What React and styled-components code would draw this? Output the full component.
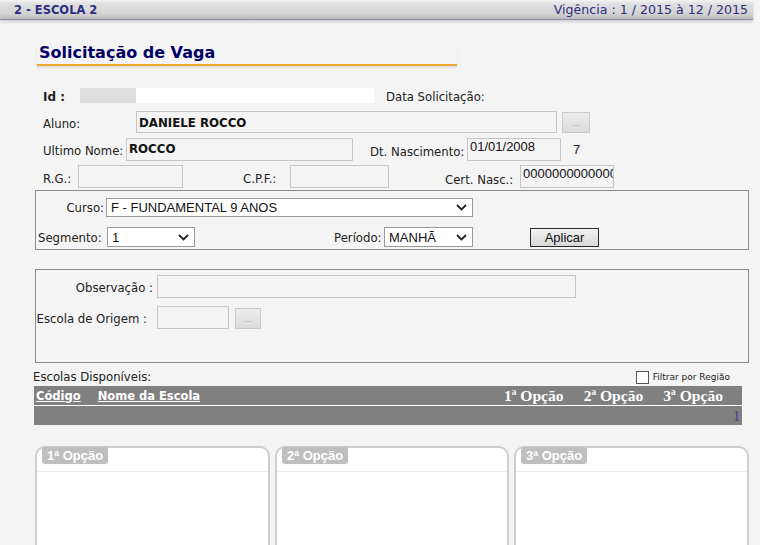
import React from 'react';
import styled, { createGlobalStyle } from 'styled-components';

const GlobalStyle = createGlobalStyle`
  body {
    margin: 0;
    background: #f4f4f4;
    font-family: "DejaVu Sans", Verdana, sans-serif;
    font-size: 11.7px;
    color: #222;
  }
`;

const Page = styled.div`
  width: 760px;
  height: 545px;
  overflow: hidden;
  background: #f4f4f4;
`;

const TopBar = styled.div`
  width: 753px;
  height: 20px;
  box-sizing: border-box;
  display: flex;
  justify-content: space-between;
  align-items: center;
  padding: 0 5px 0 14px;
  background: linear-gradient(#f4f4f4 0%, #e0e0e0 20%, #d4d4d4 70%, #bdbdbd 100%);
  border-bottom: 1px solid #8a8aa4;
  box-shadow: 0 2px 3px rgba(0, 0, 0, 0.15);
`;

const School = styled.span`
  font-weight: bold;
  font-size: 11.5px;
  color: #2e2e80;
`;

const Validity = styled.span`
  font-size: 12.6px;
  color: #2e2e80;
`;

const Main = styled.div`
  padding-left: 33px;
`;

const TitleWrap = styled.div`
  margin: 23px 0 0 4px;
  width: 420px;
  padding-bottom: 1px;
  border-bottom: 2px solid #f0a830;
  box-shadow: 0 2px 2px rgba(0, 0, 0, 0.1);
`;

const Title = styled.h1`
  margin: 0 0 0 2px;
  font-family: "DejaVu Sans", Verdana, sans-serif;
  font-size: 16px;
  line-height: 20px;
  font-weight: bold;
  color: #000066;
`;

const Row = styled.div`
  display: flex;
  align-items: center;
  height: ${p => p.$h}px;
  margin-top: ${p => p.$mt || 0}px;
  padding-left: ${p => (p.$pl === undefined ? 10 : p.$pl)}px;
`;

const Label = styled.span`
  flex: none;
  width: ${p => (p.$w ? `${p.$w}px` : 'auto')};
  margin-left: ${p => p.$ml || 0}px;
  padding-right: ${p => p.$pr || 0}px;
  padding-top: ${p => p.$dy || 0}px;
  box-sizing: border-box;
  text-align: ${p => (p.$right ? 'right' : 'left')};
  font-weight: ${p => (p.$bold ? 'bold' : 'normal')};
  font-size: ${p => p.$size || 11.7}px;
  white-space: nowrap;
  color: #222;
`;

const Cell = styled.div`
  flex: none;
  width: ${p => p.$w}px;
  height: 100%;
  background: ${p => p.$bg};
`;

const TextBox = styled.div`
  flex: none;
  width: ${p => p.$w}px;
  height: 100%;
  margin-left: ${p => p.$ml || 0}px;
  box-sizing: border-box;
  border: 1px solid #c6c6c6;
  background: #f4f4f4;
  padding: ${p => p.$pt || 3}px 2px 0;
  overflow: hidden;
  white-space: nowrap;
  font-family: ${p => (p.$plain ? '"Liberation Sans", Arial, sans-serif' : '"DejaVu Sans", Verdana, sans-serif')};
  font-size: ${p => (p.$plain ? 13 : 11.8)}px;
  font-weight: ${p => (p.$plain ? 'normal' : 'bold')};
  line-height: 14px;
  color: #111;
`;

const MiniButton = styled.div`
  flex: none;
  width: ${p => p.$w}px;
  height: 21px;
  margin-left: ${p => p.$ml}px;
  align-self: ${p => (p.$low ? 'flex-end' : 'center')};
  box-sizing: border-box;
  border: 1px solid #c8c8c8;
  background: linear-gradient(#ececec, #dcdcdc);
  display: flex;
  align-items: flex-end;
  justify-content: center;
  padding-bottom: 4px;
  font-size: 8px;
  color: #999;
`;

const Plain = styled.span`
  margin-left: ${p => p.$ml}px;
  font-family: "Liberation Sans", Arial, sans-serif;
  font-size: 13px;
  color: #222;
`;

const Panel = styled.div`
  width: 714px;
  height: ${p => p.$h}px;
  margin: ${p => p.$mt}px 0 0 2px;
  box-sizing: border-box;
  border: 1px solid #8c8c8c;
  padding-top: ${p => p.$pt}px;
`;

const Select = styled.div`
  flex: none;
  width: ${p => p.$w}px;
  height: 100%;
  box-sizing: border-box;
  border: 1px solid #9a9a9a;
  background: #fff;
  display: flex;
  align-items: center;
  justify-content: space-between;
  padding: 0 5px 0 4px;
  font-family: "Liberation Sans", Arial, sans-serif;
  font-size: 13px;
  color: #111;
`;

const ApplyButton = styled.button`
  flex: none;
  width: 69px;
  height: 19px;
  margin-left: ${p => p.$ml}px;
  padding: 0;
  border: 1px solid #2a2a2a;
  background: linear-gradient(#f2f2f2, #d8d8d8);
  font-family: "Liberation Sans", Arial, sans-serif;
  font-size: 13px;
  color: #111;
`;

const ListHead = styled.div`
  display: flex;
  align-items: center;
  justify-content: space-between;
  width: 697px;
  margin-top: 7px;
`;

const Filter = styled.label`
  display: flex;
  align-items: center;
  gap: 4px;
  font-size: 9px;
  color: #222;
`;

const Check = styled.span`
  width: 11px;
  height: 11px;
  border: 1px solid #555;
  background: #fff;
`;

const Grid = styled.div`
  width: 708px;
  margin: 2px 0 0 1px;
  background: #808080;
`;

const GridHead = styled.div`
  display: flex;
  align-items: center;
  height: 19px;
  padding: 0 19px 0 2px;
  border-bottom: 1px solid #fff;
`;

const HeadLink = styled.a`
  margin-right: ${p => p.$mr || 0}px;
  color: #fff;
  font-weight: bold;
  font-size: 11.5px;
  text-decoration: underline;
`;

const OptionHeads = styled.div`
  display: flex;
  gap: 20px;
  margin-left: auto;
`;

const OptionHead = styled.span`
  font-family: "Liberation Serif", "Times New Roman", serif;
  font-weight: bold;
  font-size: 15.6px;
  color: #fff;
`;

const GridRow = styled.div`
  height: 19px;
  line-height: 21px;
  text-align: right;
  padding-right: 2px;
  font-family: "Liberation Serif", "Times New Roman", serif;
  font-size: 14px;
  color: #3c3c90;
`;

const Choices = styled.div`
  display: flex;
  gap: 5px;
  margin: 21px 0 0 2px;
`;

const ChoiceBox = styled.div`
  flex: none;
  width: ${p => p.$w}px;
  height: 120px;
  box-sizing: border-box;
  border: 2px solid #cdcdcd;
  border-bottom: none;
  border-radius: 10px 10px 0 0;
  background: #fff;
`;

const ChoiceTop = styled.div`
  height: 23px;
  border-bottom: 1px solid #ececec;
  padding-left: 5px;
`;

const Pill = styled.span`
  display: inline-block;
  height: 17px;
  margin-top: -1px;
  padding: 0 5px;
  border-radius: 3px;
  background: #bfbfbf;
  font-family: "Liberation Sans", Arial, sans-serif;
  font-weight: bold;
  font-size: 13px;
  line-height: 17px;
  color: #fff;
`;

const Chevron = () => (
  <svg width="11" height="7" viewBox="0 0 11 7">
    <path d="M1 1l4.5 4.5L10 1" fill="none" stroke="#222" strokeWidth="1.8" />
  </svg>
);

export default function App() {
  return (
    <Page>
      <GlobalStyle />
      <TopBar>
        <School>2 - ESCOLA 2</School>
        <Validity>Vigência : 1 / 2015 à 12 / 2015</Validity>
      </TopBar>
      <Main>
        <TitleWrap>
          <Title>Solicitação de Vaga</Title>
        </TitleWrap>

        <Row $h={15} $mt={22}>
          <Label $w={37} $bold $size={12} $dy={2}>Id :</Label>
          <Cell $w={56} $bg="#dedede" />
          <Cell $w={238} $bg="#fff" />
          <Label $ml={12} $dy={2}>Data Solicitação:</Label>
        </Row>
        <Row $h={22} $mt={8}>
          <Label $w={93} $dy={3}>Aluno:</Label>
          <TextBox $w={421} $pt={4}>DANIELE ROCCO</TextBox>
          <MiniButton $w={28} $ml={5}>...</MiniButton>
        </Row>
        <Row $h={23} $mt={5}>
          <Label $w={83} $dy={2}>Ultimo Nome:</Label>
          <TextBox $w={227}>ROCCO</TextBox>
          <Label $w={97} $ml={17} $dy={4}>Dt. Nascimento:</Label>
          <TextBox $w={94} $plain $pt={1}>01/01/2008</TextBox>
          <Plain $ml={12}>7</Plain>
        </Row>
        <Row $h={23} $mt={4}>
          <Label $w={35} $dy={4}>R.G.:</Label>
          <TextBox $w={105} />
          <Label $w={47} $ml={60} $dy={4}>C.P.F.:</Label>
          <TextBox $w={99} />
          <Label $w={75} $ml={56} $dy={6}>Cert. Nasc.:</Label>
          <TextBox $w={94} $plain $pt={1}>0000000000000</TextBox>
        </Row>

        <Panel $h={60} $mt={2} $pt={7}>
          <Row $h={19} $pl={0}>
            <Label $w={70} $right $pr={2}>Curso:</Label>
            <Select $w={367}>F - FUNDAMENTAL 9 ANOS<Chevron /></Select>
          </Row>
          <Row $h={20} $mt={10} $pl={2}>
            <Label $w={69} $dy={1}>Segmento:</Label>
            <Select $w={88}>1<Chevron /></Select>
            <Label $w={50} $ml={139} $dy={1}>Período:</Label>
            <Select $w={89}>MANHÃ<Chevron /></Select>
            <ApplyButton $ml={57}>Aplicar</ApplyButton>
          </Row>
        </Panel>

        <Panel $h={94} $mt={19} $pt={5}>
          <Row $h={23} $pl={0}>
            <Label $w={121} $right $pr={4} $dy={2}>Observação :</Label>
            <TextBox $w={419} />
          </Row>
          <Row $h={23} $mt={8} $pl={0}>
            <Label $w={121} $right $pr={10} $dy={2}>Escola de Origem :</Label>
            <TextBox $w={72} />
            <MiniButton $w={26} $ml={6} $low>...</MiniButton>
          </Row>
        </Panel>

        <ListHead>
          <Label>Escolas Disponíveis:</Label>
          <Filter>
            <Check />
            Filtrar por Região
          </Filter>
        </ListHead>
        <Grid>
          <GridHead>
            <HeadLink $mr={17}>Código</HeadLink>
            <HeadLink>Nome da Escola</HeadLink>
            <OptionHeads>
              <OptionHead>1ª Opção</OptionHead>
              <OptionHead>2ª Opção</OptionHead>
              <OptionHead>3ª Opção</OptionHead>
            </OptionHeads>
          </GridHead>
          <GridRow>1</GridRow>
        </Grid>

        <Choices>
          {[['1ª Opção', 235], ['2ª Opção', 234], ['3ª Opção', 235]].map(([name, w]) => (
            <ChoiceBox key={name} $w={w}>
              <ChoiceTop>
                <Pill>{name}</Pill>
              </ChoiceTop>
            </ChoiceBox>
          ))}
        </Choices>
      </Main>
    </Page>
  );
}
